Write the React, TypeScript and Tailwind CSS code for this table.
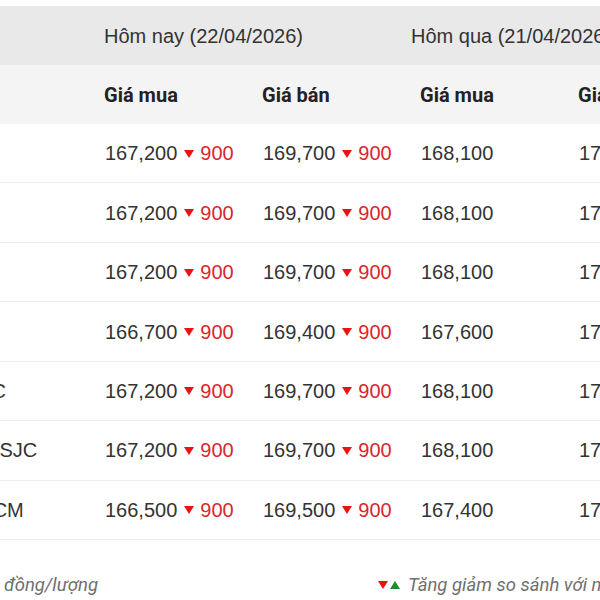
const rows = [
  { name: 'SJC', buy: '167,200', sell: '169,700', yBuy: '168,100', ySell: '170,600' },
  { name: 'DOJI HN', buy: '167,200', sell: '169,700', yBuy: '168,100', ySell: '170,600' },
  { name: 'PNJ HN', buy: '167,200', sell: '169,700', yBuy: '168,100', ySell: '170,600' },
  { name: 'Mi Hồng', buy: '166,700', sell: '169,400', yBuy: '167,600', ySell: '170,300' },
  { name: 'BIDV SJC', buy: '167,200', sell: '169,700', yBuy: '168,100', ySell: '170,600' },
  { name: 'Phú Quý SJC', buy: '167,200', sell: '169,700', yBuy: '168,100', ySell: '170,600' },
  { name: 'BTMC HCM', buy: '166,500', sell: '169,500', yBuy: '167,400', ySell: '170,400' },
];

function Down({ className = '' }: { className?: string }) {
  return (
    <svg viewBox="0 0 10 8" className={`w-[10px] h-[8px] shrink-0 ${className}`}>
      <polygon points="0,0 10,0 5,8" fill="#ee1111" />
    </svg>
  );
}

function Up({ className = '' }: { className?: string }) {
  return (
    <svg viewBox="0 0 10 8" className={`w-[10px] h-[8px] shrink-0 ${className}`}>
      <polygon points="0,8 10,8 5,0" fill="#1e8a2e" />
    </svg>
  );
}

// giá hôm nay kèm mức giảm
function PriceCell({ value, diff }: { value: string; diff?: string }) {
  return (
    <div className="flex items-center pl-[15px] whitespace-nowrap">
      <span>{value}</span>
      {diff && (
        <>
          <Down className="ml-[7px] mr-[6px] mt-[1px]" />
          <span className="text-[#d9262e]">{diff}</span>
        </>
      )}
    </div>
  );
}

const grid = 'grid grid-cols-[190px_158px_158px_158px_158px]';

export default function App() {
  return (
    <div className="w-[600px] h-[600px] overflow-hidden bg-white text-[#333] text-[20px] font-['Liberation_Sans',Arial,sans-serif]">
      <div className="pt-[6px] -ml-[100px] w-[822px]">
        <div className="flex h-[59px] items-center bg-[#e9e9e9]">
          <div className="w-[190px] shrink-0" />
          <div className="w-[307px] shrink-0 pl-[14px] whitespace-nowrap">Hôm nay (22/04/2026)</div>
          <div className="pl-[14px] whitespace-nowrap">Hôm qua (21/04/2026)</div>
        </div>
        <div className={`${grid} h-[59px] items-center bg-[#f4f4f4] font-['Roboto',sans-serif] font-bold text-[20px] text-[#222]`}>
          <div />
          <div className="pl-[14px]">Giá mua</div>
          <div className="pl-[14px]">Giá bán</div>
          <div className="pl-[14px]">Giá mua</div>
          <div className="pl-[14px]">Giá bán</div>
        </div>
        {rows.map((r) => (
          <div key={r.name} className={`${grid} h-[59.45px] items-center border-b border-[#ececec]`}>
            <div className="pl-[16px] whitespace-nowrap">{r.name}</div>
            <PriceCell value={r.buy} diff="900" />
            <PriceCell value={r.sell} diff="900" />
            <PriceCell value={r.yBuy} />
            <PriceCell value={r.ySell} />
          </div>
        ))}
        <div className="flex items-center pt-[31px] leading-[28px] italic text-[#6f6f6f] text-[18.5px] font-['Roboto',sans-serif] whitespace-nowrap">
          <div className="w-[198px] shrink-0 flex justify-end">
            <span>Đơn vị tính: nghìn đồng/lượng</span>
          </div>
          <div className="ml-[280px] flex items-center">
            <Down />
            <Up className="ml-[2px]" />
            <span className="ml-[8px]">Tăng giảm so sánh với ngày hôm qua</span>
          </div>
        </div>
      </div>
    </div>
  );
}
